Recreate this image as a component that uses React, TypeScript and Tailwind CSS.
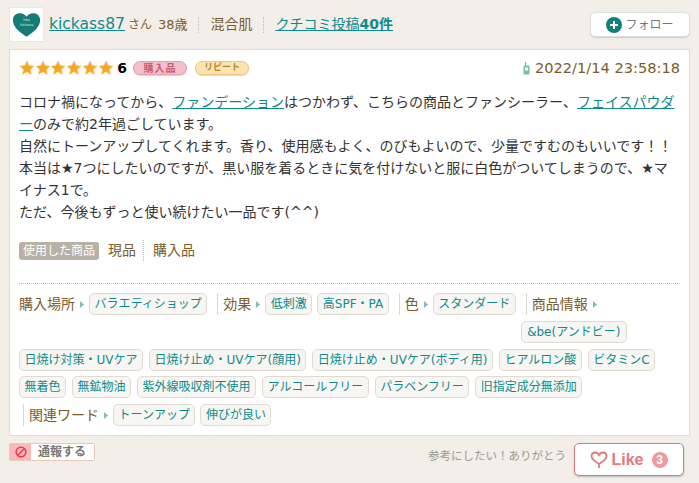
import React from 'react'

const Star = () => (
  <svg viewBox="0 0 24 24" className="w-[16px] h-[16px] -mr-[0.3px]">
    <path
      d="M12 1.500l3.200 6.900 7.500.9-5.600 5.100 1.500 7.500L12 17.700l-6.600 3.700 1.500-7.500L1.300 9.300l7.500-.9z"
      fill="#f5a623"
      stroke="#f7c56a"
      strokeWidth="1"
      strokeLinejoin="round"
    />
  </svg>
)

const Tag: React.FC<{ children: React.ReactNode; className?: string }> = ({ children, className }) => (
  <a className={`inline-flex items-center h-[22px] px-[4.5px] rounded-[5px] border border-[#e0dbd0] bg-[#f8f6f3] text-[#0d8b8c] text-[12px] whitespace-nowrap ${className ?? ''}`}>
    {children}
  </a>
)

const Label: React.FC<{ children: React.ReactNode; bar?: boolean }> = ({ children, bar }) => (
  <span className={`inline-flex items-center h-[22px] text-[#7a5c2e] text-[14px] whitespace-nowrap ${bar ? 'ml-[5px] pl-[5px] border-l border-[#ddd8cc]' : ''}`}>
    {children}
    <svg viewBox="0 0 4 7" className="w-[4px] h-[7px] ml-[5px]">
      <path d="M0 0l4 3.500-4 3.500z" fill="#7fbfb0" />
    </svg>
  </span>
)

export default function App() {
  return (
    <div className="w-[699px] h-[483px] bg-[#f3eee8] font-['DejaVu_Sans','Noto_Sans_CJK_JP',sans-serif] text-[#5c4a32] overflow-hidden">
      <div className="h-[49px] pl-[9px] pr-[9px] flex items-center">
        <div className="w-[35px] h-[35px] bg-white border border-[#ece6de] flex items-center justify-center">
          <svg viewBox="0 0 32 27" className="w-[29px] h-[25px]">
            <path d="M16 27C6 20.500 1 15 1 8.500 1 4 4.500 1 8.500 1 11.800 1 14.500 2.500 16 5 17.500 2.500 20.200 1 23.500 1 27.500 1 31 4 31 8.500 31 15 26 20.500 16 27z" fill="#167a76" />
            <text x="16" y="10" textAnchor="middle" fontSize="4" fill="#d9efec">hey</text>
            <text x="16" y="15" textAnchor="middle" fontSize="4" fill="#d9efec">kickass</text>
          </svg>
        </div>
        <a className="ml-[5px] text-[15.500px] text-[#0d8b8c] underline leading-none">kickass87</a>
        <span className="ml-[3px] text-[12px] text-[#7a5c2e]">さん</span>
        <span className="ml-[6px] text-[13px] text-[#7a5c2e]">38歳</span>
        <span className="ml-[11px] h-[16px] border-l border-dotted border-[#bbb]" />
        <span className="ml-[11px] text-[14px] text-[#7a5c2e]">混合肌</span>
        <span className="ml-[11px] h-[16px] border-l border-dotted border-[#bbb]" />
        <a className="ml-[11px] text-[14px] text-[#0d8b8c] underline">
          クチコミ投稿<b>40件</b>
        </a>
        <button className="ml-auto w-[100px] h-[25px] bg-white border border-[#ddd] rounded-[5px] shadow-[0_1px_1px_#ccc] flex items-center justify-center text-[12px] text-[#777]">
          <svg viewBox="0 0 16 16" className="w-4 h-4 mr-[3px]">
            <circle cx="8" cy="8" r="8" fill="#12807c" />
            <path d="M8 4v8M4 8h8" stroke="#fff" strokeWidth="2" />
          </svg>
          フォロー
        </button>
      </div>

      <div className="mx-[9px] w-[681px] h-[387px] bg-white border border-[#e6dccd] pl-[9px] pr-[9px]">
        <div className="flex items-center h-[36px]">
          <div className="flex">
            <Star /><Star /><Star /><Star /><Star /><Star />
          </div>
          <b className="ml-[4px] text-[14px] text-black">6</b>
          <span className="ml-[6px] w-[54px] h-[14px] rounded-full bg-[#f2c0cb] border border-[#e8a0b0] shadow-[0_1px_0_#ddd] text-[#c85a72] text-[10px] tracking-[1px] font-bold flex items-center justify-center">購入品</span>
          <span className="ml-[8px] w-[54px] h-[14px] rounded-full bg-[#fde3b0] border border-[#f2c878] shadow-[0_1px_0_#ddd] text-[#b08a30] text-[9px] font-bold flex items-center justify-center">リピート</span>
          <svg viewBox="0 0 7 13" className="ml-auto w-[7px] h-[13px]">
            <path d="M0.500 4.500a1 1 0 0 1 1-1h4a1 1 0 0 1 1 1v7a1 1 0 0 1-1 1h-4a1 1 0 0 1-1-1z" fill="#6fc4aa" />
            <path d="M2 0h1.200v4H2z" fill="#6fc4aa" />
            <path d="M2 5.500h3v3H2z" fill="#fff" />
          </svg>
          <span className="ml-[5px] text-[14.600px] text-[#7a5c2e]">2022/1/14 23:58:18</span>
        </div>

        <p className="mt-[5px] text-[14px] leading-[22px] text-[#333]">
          コロナ禍になってから、<a className="text-[#0d8b8c] underline">ファンデーション</a>はつかわず、こちらの商品とファンシーラー、<a className="text-[#0d8b8c] underline">フェイスパウダー</a>のみで約2年過ごしています。<br />
          自然にトーンアップしてくれます。香り、使用感もよく、のびもよいので、少量ですむのもいいです！！<br />
          本当は★7つにしたいのですが、黒い服を着るときに気を付けないと服に白色がついてしまうので、★マイナス1で。<br />
          ただ、今後もずっと使い続けたい一品です(^^)
        </p>

        <div className="mt-[17px] flex items-center text-[14px] text-[#7a5c2e]">
          <span className="h-[18px] px-[4px] rounded-[3px] bg-[#b8b2a6] text-white text-[12px] flex items-center">使用した商品</span>
          <span className="ml-[9px] pr-[7px] border-r border-dotted border-[#bbb]">現品</span>
          <span className="ml-[9px]">購入品</span>
        </div>

        <div className="mt-[22px] pt-[9px] border-t border-dotted border-[#bbb]">
          <div className="flex items-start gap-x-[5px]">
            <Label>購入場所</Label>
            <Tag>バラエティショップ</Tag>
            <Label bar>効果</Label>
            <Tag>低刺激</Tag>
            <Tag>高SPF・PA</Tag>
            <Label bar>色</Label>
            <Tag>スタンダード</Tag>
            <div className="flex flex-col items-start gap-[6px]">
              <Label bar>商品情報</Label>
              <Tag className="w-[106px] justify-center">&amp;be(アンドビー)</Tag>
            </div>
          </div>
          <div className="mt-[6px] flex flex-wrap gap-x-[6px] gap-y-[5px]">
            <Tag>日焼け対策・UVケア</Tag>
            <Tag>日焼け止め・UVケア(顔用)</Tag>
            <Tag>日焼け止め・UVケア(ボディ用)</Tag>
            <Tag>ヒアルロン酸</Tag>
            <Tag>ビタミンC</Tag>
            <Tag>無着色</Tag>
            <Tag>無鉱物油</Tag>
            <Tag>紫外線吸収剤不使用</Tag>
            <Tag>アルコールフリー</Tag>
            <Tag>パラベンフリー</Tag>
            <Tag>旧指定成分無添加</Tag>
          </div>
          <div className="mt-[6px] -ml-[1px] flex gap-x-[5px]">
            <Label bar>関連ワード</Label>
            <Tag>トーンアップ</Tag>
            <Tag>伸びが良い</Tag>
          </div>
        </div>
      </div>

      <div className="ml-[9px] mr-[15px] mt-[7px] flex items-start">
        <span className="w-[86px] h-[18px] flex items-center bg-white border border-[#e8c8b8] rounded-[2px] text-[#777] text-[12px]">
          <span className="w-[21px] h-full bg-[#f8b8bc] flex items-center justify-center">
            <svg viewBox="0 0 12 12" className="w-[12px] h-[12px]">
              <circle cx="6" cy="6" r="4.800" fill="none" stroke="#ee3a50" strokeWidth="1.600" />
              <path d="M2.800 9.200l6.400-6.400" stroke="#ee3a50" strokeWidth="1.600" />
            </svg>
          </span>
          <span className="pl-[7px] font-bold">通報する</span>
        </span>
        <span className="ml-auto mt-[5px] text-[11.500px] text-[#999]">参考にしたい！ありがとう</span>
        <button className="ml-[8px] w-[110px] h-[33px] bg-white border border-[#d67b7b] rounded-[5px] shadow-[0_1px_2px_#bbb] flex items-center justify-center text-[#e07a80] text-[16px] font-bold font-['Liberation_Sans',sans-serif]">
          <svg viewBox="0 0 18 18" className="w-[18px] h-[18px] mr-[3px]">
            <path d="M9 13C4 10 1.500 7.500 1.500 5 1.500 3 3 1.500 5 1.500 6.800 1.500 8.200 2.500 9 4 9.800 2.500 11.200 1.500 13 1.500 15 1.500 16.500 3 16.500 5 16.500 7.500 14 10 9 13zM9 13v4" fill="none" stroke="#e07a80" strokeWidth="1.800" />
          </svg>
          Like
          <span className="ml-2 w-4 h-4 rounded-full bg-[#ee9a9e] text-white text-[12px] flex items-center justify-center">3</span>
        </button>
      </div>
    </div>
  )
}
